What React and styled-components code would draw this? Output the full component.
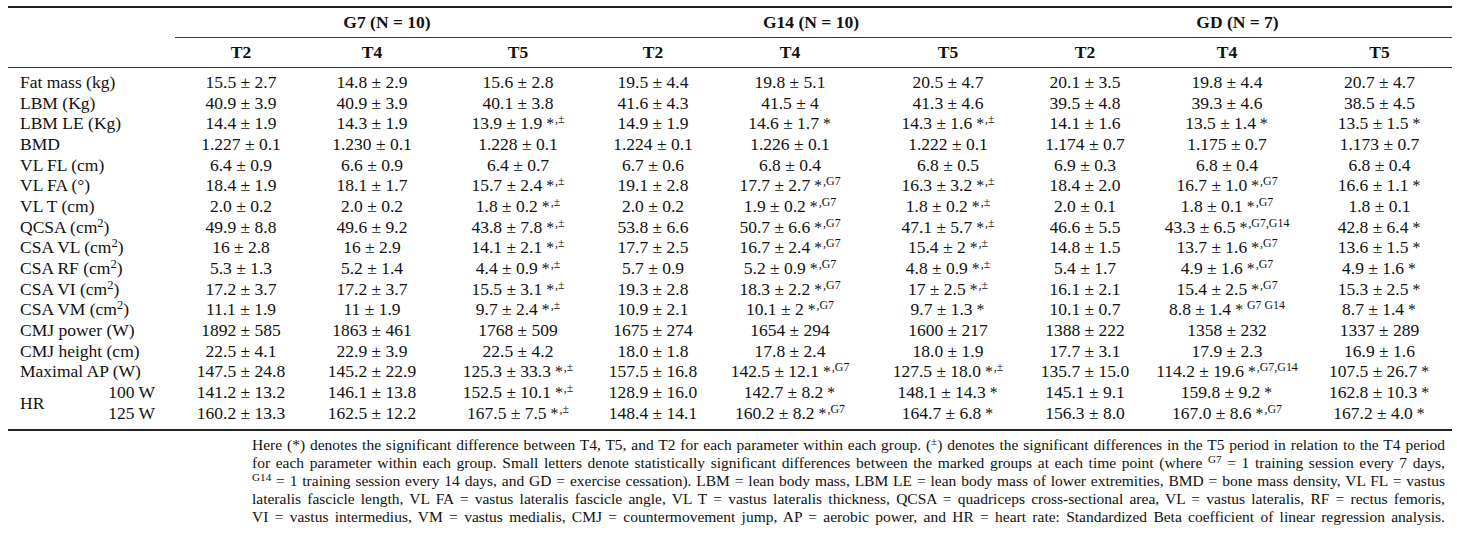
import styled, { createGlobalStyle } from "styled-components";

const GlobalStyle = createGlobalStyle`
  body {
    margin: 0;
    background: #ffffff;
    color: #111111;
    font-family: "Liberation Serif", "Times New Roman", serif;
  }
`;

// column widths chosen so each column centre sits where it does in the table
const COLS = "167px 132px 130px 162px 108px 166px 150px 124px 160px 145px";

const Page = styled.div`
  padding: 6px 5px 0 8px;
  width: 1444px;
`;

const Table = styled.div`
  border-top: 2px solid #222;
  border-bottom: 2px solid #222;
  font-size: 17.5px;
`;

const HeadRow = styled.div`
  display: grid;
  grid-template-columns: ${COLS};
  height: 30px;
  border-bottom: ${({ $ruled }) => ($ruled ? "1px solid #3a3a3a" : "none")};
  box-sizing: border-box;
`;

const GroupCell = styled.div`
  grid-column: span 3;
  display: flex;
  align-items: center;
  justify-content: center;
  font-weight: 700;
  border-bottom: 1px solid #3a3a3a;
  box-sizing: border-box;
`;

const HeadCell = styled.div`
  display: flex;
  align-items: center;
  justify-content: center;
  font-weight: 700;
`;

const Body = styled.div`
  display: grid;
  grid-template-columns: ${COLS};
  grid-auto-rows: 20.7px;
  padding: 4px 0 5px;
`;

const Label = styled.div`
  display: flex;
  align-items: center;
  padding-left: 12px;
  white-space: nowrap;
`;

const SpanLabel = styled(Label)`
  grid-row: span 2;
  justify-content: space-between;
  padding-right: 20px;
`;

const SubLabels = styled.div`
  display: flex;
  flex-direction: column;
  align-items: flex-end;
  line-height: 20.7px;
`;

const Cell = styled.div`
  display: flex;
  align-items: center;
  justify-content: center;
  white-space: nowrap;
`;

const Sup = styled.sup`
  font-size: ${({ $small }) => ($small ? "0.68em" : "0.72em")};
  line-height: 0;
  vertical-align: ${({ $small }) => ($small ? "0.5em" : "0.45em")};
`;

const Ast = styled.span`
  font-size: 0.9em;
  margin-left: 4px;
  margin-right: 1px;
`;

const Footnote = styled.div`
  margin-top: 5px;
  padding: 0 7px 0 244px;
  font-size: 15.5px;
  line-height: 18px;
`;

const NoteLine = styled.div`
  text-align: justify;
  text-align-last: justify;
  white-space: nowrap;
`;

const groups = ["G7 (N = 10)", "G14 (N = 10)", "GD (N = 7)"];
const times = ["T2", "T4", "T5"];

const rows = [
  ["Fat mass (kg)", null, ["15.5 ± 2.7"], ["14.8 ± 2.9"], ["15.6 ± 2.8"], ["19.5 ± 4.4"], ["19.8 ± 5.1"], ["20.5 ± 4.7"], ["20.1 ± 3.5"], ["19.8 ± 4.4"], ["20.7 ± 4.7"]],
  ["LBM (Kg)", null, ["40.9 ± 3.9"], ["40.9 ± 3.9"], ["40.1 ± 3.8"], ["41.6 ± 4.3"], ["41.5 ± 4"], ["41.3 ± 4.6"], ["39.5 ± 4.8"], ["39.3 ± 4.6"], ["38.5 ± 4.5"]],
  ["LBM LE (Kg)", null, ["14.4 ± 1.9"], ["14.3 ± 1.9"], ["13.9 ± 1.9", ",±"], ["14.9 ± 1.9"], ["14.6 ± 1.7", ""], ["14.3 ± 1.6", ",±"], ["14.1 ± 1.6"], ["13.5 ± 1.4", ""], ["13.5 ± 1.5", ""]],
  ["BMD", null, ["1.227 ± 0.1"], ["1.230 ± 0.1"], ["1.228 ± 0.1"], ["1.224 ± 0.1"], ["1.226 ± 0.1"], ["1.222 ± 0.1"], ["1.174 ± 0.7"], ["1.175 ± 0.7"], ["1.173 ± 0.7"]],
  ["VL FL (cm)", null, ["6.4 ± 0.9"], ["6.6 ± 0.9"], ["6.4 ± 0.7"], ["6.7 ± 0.6"], ["6.8 ± 0.4"], ["6.8 ± 0.5"], ["6.9 ± 0.3"], ["6.8 ± 0.4"], ["6.8 ± 0.4"]],
  ["VL FA (°)", null, ["18.4 ± 1.9"], ["18.1 ± 1.7"], ["15.7 ± 2.4", ",±"], ["19.1 ± 2.8"], ["17.7 ± 2.7", ",G7"], ["16.3 ± 3.2", ",±"], ["18.4 ± 2.0"], ["16.7 ± 1.0", ",G7"], ["16.6 ± 1.1", ""]],
  ["VL T (cm)", null, ["2.0 ± 0.2"], ["2.0 ± 0.2"], ["1.8 ± 0.2", ",±"], ["2.0 ± 0.2"], ["1.9 ± 0.2", ",G7"], ["1.8 ± 0.2", ",±"], ["2.0 ± 0.1"], ["1.8 ± 0.1", ",G7"], ["1.8 ± 0.1"]],
  ["QCSA (cm", "2", ["49.9 ± 8.8"], ["49.6 ± 9.2"], ["43.8 ± 7.8", ",±"], ["53.8 ± 6.6"], ["50.7 ± 6.6", ",G7"], ["47.1 ± 5.7", ",±"], ["46.6 ± 5.5"], ["43.3 ± 6.5", ",G7,G14"], ["42.8 ± 6.4", ""]],
  ["CSA VL (cm", "2", ["16 ± 2.8"], ["16 ± 2.9"], ["14.1 ± 2.1", ",±"], ["17.7 ± 2.5"], ["16.7 ± 2.4", ",G7"], ["15.4 ± 2", ",±"], ["14.8 ± 1.5"], ["13.7 ± 1.6", ",G7"], ["13.6 ± 1.5", ""]],
  ["CSA RF (cm", "2", ["5.3 ± 1.3"], ["5.2 ± 1.4"], ["4.4 ± 0.9", ",±"], ["5.7 ± 0.9"], ["5.2 ± 0.9", ",G7"], ["4.8 ± 0.9", ",±"], ["5.4 ± 1.7"], ["4.9 ± 1.6", ",G7"], ["4.9 ± 1.6", ""]],
  ["CSA VI (cm", "2", ["17.2 ± 3.7"], ["17.2 ± 3.7"], ["15.5 ± 3.1", ",±"], ["19.3 ± 2.8"], ["18.3 ± 2.2", ",G7"], ["17 ± 2.5", ",±"], ["16.1 ± 2.1"], ["15.4 ± 2.5", ",G7"], ["15.3 ± 2.5", ""]],
  ["CSA VM (cm", "2", ["11.1 ± 1.9"], ["11 ± 1.9"], ["9.7 ± 2.4", ",±"], ["10.9 ± 2.1"], ["10.1 ± 2", ",G7"], ["9.7 ± 1.3", ""], ["10.1 ± 0.7"], ["8.8 ± 1.4", "\u00a0G7 G14"], ["8.7 ± 1.4", ""]],
  ["CMJ power (W)", null, ["1892 ± 585"], ["1863 ± 461"], ["1768 ± 509"], ["1675 ± 274"], ["1654 ± 294"], ["1600 ± 217"], ["1388 ± 222"], ["1358 ± 232"], ["1337 ± 289"]],
  ["CMJ height (cm)", null, ["22.5 ± 4.1"], ["22.9 ± 3.9"], ["22.5 ± 4.2"], ["18.0 ± 1.8"], ["17.8 ± 2.4"], ["18.0 ± 1.9"], ["17.7 ± 3.1"], ["17.9 ± 2.3"], ["16.9 ± 1.6"]],
  ["Maximal AP (W)", null, ["147.5 ± 24.8"], ["145.2 ± 22.9"], ["125.3 ± 33.3", ",±"], ["157.5 ± 16.8"], ["142.5 ± 12.1", ",G7"], ["127.5 ± 18.0", ",±"], ["135.7 ± 15.0"], ["114.2 ± 19.6", ",G7,G14"], ["107.5 ± 26.7", ""]],
];

const hrRows = [
  [["141.2 ± 13.2"], ["146.1 ± 13.8"], ["152.5 ± 10.1", ",±"], ["128.9 ± 16.0"], ["142.7 ± 8.2", ""], ["148.1 ± 14.3", ""], ["145.1 ± 9.1"], ["159.8 ± 9.2", ""], ["162.8 ± 10.3", ""]],
  [["160.2 ± 13.3"], ["162.5 ± 12.2"], ["167.5 ± 7.5", ",±"], ["148.4 ± 14.1"], ["160.2 ± 8.2", ",G7"], ["164.7 ± 6.8", ""], ["156.3 ± 8.0"], ["167.0 ± 8.6", ",G7"], ["167.2 ± 4.0", ""]],
];

function Value({ v, mark }) {
  return (
    <Cell>
      <span>
        {v}
        {mark !== undefined && (
          <>
            <Ast>*</Ast>
            {mark && <Sup $small>{mark}</Sup>}
          </>
        )}
      </span>
    </Cell>
  );
}

export default function App() {
  return (
    <>
      <GlobalStyle />
      <Page>
        <Table>
          <HeadRow>
            <div />
            {groups.map((g) => (
              <GroupCell key={g}>{g}</GroupCell>
            ))}
          </HeadRow>
          <HeadRow $ruled>
            <div />
            {groups.map((g) =>
              times.map((t) => <HeadCell key={g + t}>{t}</HeadCell>)
            )}
          </HeadRow>
          <Body>
            {rows.map(([label, sup, ...vals]) => [
              <Label key={label}>
                <span>
                  {label}
                  {sup && (
                    <>
                      <Sup>{sup}</Sup>)
                    </>
                  )}
                </span>
              </Label>,
              ...vals.map(([v, m], i) => <Value key={label + i} v={v} mark={m} />),
            ])}
            <SpanLabel>
              <span>HR</span>
              <SubLabels>
                <span>100 W</span>
                <span>125 W</span>
              </SubLabels>
            </SpanLabel>
            {hrRows.map((r, ri) =>
              r.map(([v, m], i) => <Value key={"hr" + ri + i} v={v} mark={m} />)
            )}
          </Body>
        </Table>
        <Footnote>
          <NoteLine>
            Here (*) denotes the significant difference between T4, T5, and T2 for each parameter within each group. (<Sup>±</Sup>) denotes the significant differences in the T5 period in relation to the T4 period
          </NoteLine>
          <NoteLine>
            for each parameter within each group. Small letters denote statistically significant differences between the marked groups at each time point (where <Sup>G7</Sup> = 1 training session every 7 days,
          </NoteLine>
          <NoteLine>
            <Sup>G14</Sup> = 1 training session every 14 days, and GD = exercise cessation). LBM = lean body mass, LBM LE = lean body mass of lower extremities, BMD = bone mass density, VL FL = vastus
          </NoteLine>
          <NoteLine>
            lateralis fascicle length, VL FA = vastus lateralis fascicle angle, VL T = vastus lateralis thickness, QCSA = quadriceps cross-sectional area, VL = vastus lateralis, RF = rectus femoris,
          </NoteLine>
          <NoteLine>
            VI = vastus intermedius, VM = vastus medialis, CMJ = countermovement jump, AP = aerobic power, and HR = heart rate: Standardized Beta coefficient of linear regression analysis.
          </NoteLine>
        </Footnote>
      </Page>
    </>
  );
}
